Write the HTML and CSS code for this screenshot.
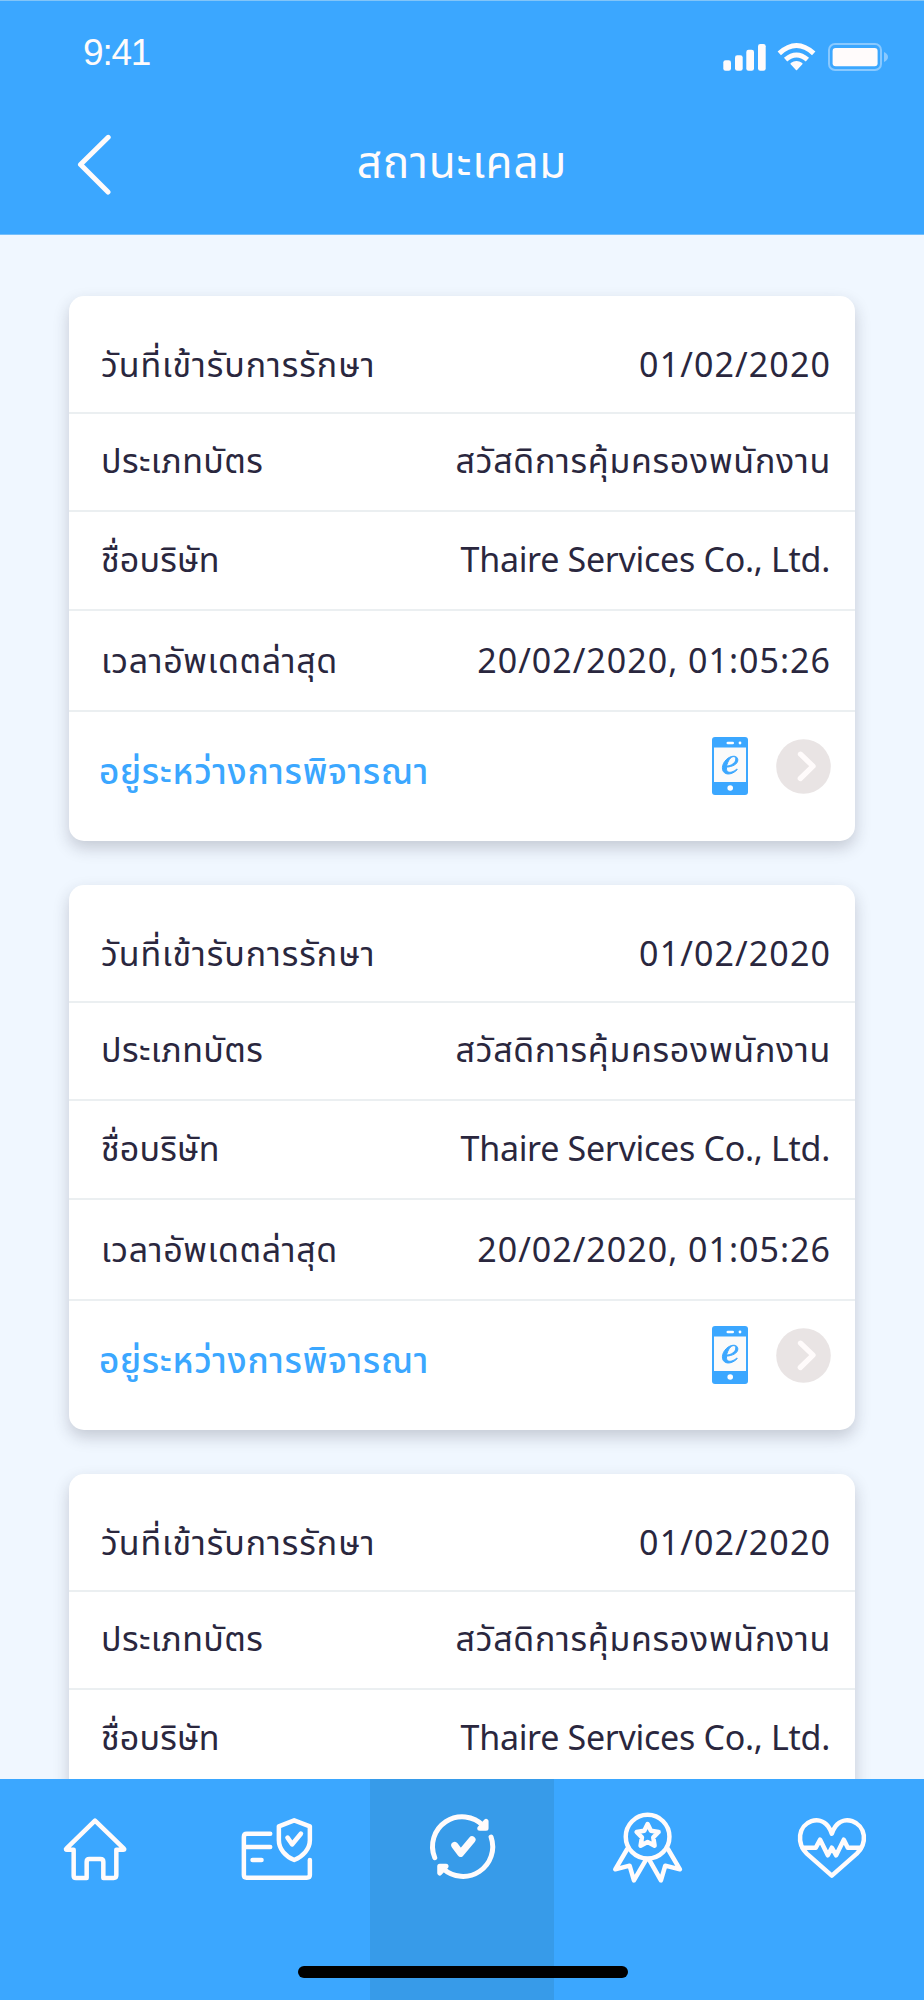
FILE: index.html
```html
<!DOCTYPE html>
<html lang="th">
<head>
<meta charset="utf-8">
<title>สถานะเคลม</title>
<link rel="stylesheet" href="styles.css">
</head>
<body>
<svg width="0" height="0" class="defs">
  <defs>
    <symbol id="ecard" viewBox="0 0 36 58">
      <rect width="36" height="58" rx="3" fill="#3ba7ff"/>
      <rect x="2" y="10.5" width="32" height="34.5" fill="#fafafa"/>
      <rect x="14.5" y="4.7" width="7.5" height="2.6" rx="1.3" fill="#fff"/>
      <circle cx="28" cy="6" r="1.4" fill="#fff"/>
      <circle cx="18.2" cy="51" r="2.8" fill="#fff"/>
      <path d="M13.5 30.2C20 30 26.3 27.200 25.800 22.600C25.300 18.600 20.500 18.200 16 21.200C10.500 25 8.500 32.500 12.500 35.800C16 38.500 22 36.300 25.300 32.500L24.800 32C21.500 35 17.500 36.200 15.500 34.500C13.500 32.500 14.500 26.500 17.500 22.300C20 19 23.500 18.600 23.800 21.800C24 25.500 19.500 29 14 29.200Z" fill="#3ba7ff" stroke="#3ba7ff" stroke-width="1"/>
    </symbol>
    <symbol id="go" viewBox="0 0 55 55">
      <circle cx="27.500" cy="27.500" r="27.300" fill="#e9e4e4"/>
      <path d="M24.500 15.200L37 27.200L24.300 39.500" fill="none" stroke="#fffbfb" stroke-width="5.300" stroke-linecap="round" stroke-linejoin="round"/>
    </symbol>
  </defs>
</svg>
<div class="screen">
  <header class="header">
    <div class="status">
      <span class="time">9:41</span>
      <svg class="indicators" width="168" height="32" viewBox="0 0 168 32">
        <g fill="#fffbfb">
          <rect x="1.300" y="18.300" width="7.700" height="10.400" rx="2.300"/>
          <rect x="13" y="13.300" width="7.700" height="15.400" rx="2.300"/>
          <rect x="24.300" y="7.700" width="7.700" height="21" rx="2.300"/>
          <rect x="36" y="2" width="7.700" height="26.700" rx="2.300"/>
          <rect x="110.600" y="6" width="45" height="18.200" rx="3"/>
          <path d="M69.200 21.700Q74.500 17.800 79.800 21.700L74.500 27.500Z" stroke="#fffbfb" stroke-width="1.500" stroke-linejoin="round"/>
        </g>
        <g fill="none" stroke="#fffbfb" stroke-width="5">
          <path d="M57.300 11.300Q74.500 -4.300 91.700 11.300"/>
          <path d="M63.600 17.700Q74.500 8.300 85.400 17.700"/>
        </g>
        <rect x="107" y="2" width="52" height="26" rx="6" fill="none" stroke="#89c9ff" stroke-width="2"/>
        <path d="M162 10Q166 12 166 15T162 20Z" fill="#89c9ff"/>
      </svg>
    </div>
    <div class="titlebar">
      <svg class="back" width="36" height="62" viewBox="0 0 36 62"><path d="M32.200 4.300L4.500 31.500L32 59" fill="none" stroke="#fffbfb" stroke-width="5" stroke-linecap="round" stroke-linejoin="round"/></svg>
      <h1 class="title">สถานะเคลม</h1>
    </div>
  </header>
  <main class="list">
    <section class="card">
      <div class="row row-date"><span class="t-date">วันที่เข้ารับการรักษา</span><span class="v-date">01/02/2020</span></div>
      <div class="row row-type"><span class="t-type">ประเภทบัตร</span><span class="v-type">สวัสดิการคุ้มครองพนักงาน</span></div>
      <div class="row row-company"><span class="t-company">ชื่อบริษัท</span><span class="v-company">Thaire Services Co., Ltd.</span></div>
      <div class="row row-update"><span class="t-update">เวลาอัพเดตล่าสุด</span><span class="v-update">20/02/2020, 01:05:26</span></div>
      <div class="foot"><span class="t-state">อยู่ระหว่างการพิจารณา</span><div class="actions"><svg width="36" height="58"><use href="#ecard"/></svg><svg width="55" height="55"><use href="#go"/></svg></div></div>
    </section>
    <section class="card">
      <div class="row row-date"><span class="t-date">วันที่เข้ารับการรักษา</span><span class="v-date">01/02/2020</span></div>
      <div class="row row-type"><span class="t-type">ประเภทบัตร</span><span class="v-type">สวัสดิการคุ้มครองพนักงาน</span></div>
      <div class="row row-company"><span class="t-company">ชื่อบริษัท</span><span class="v-company">Thaire Services Co., Ltd.</span></div>
      <div class="row row-update"><span class="t-update">เวลาอัพเดตล่าสุด</span><span class="v-update">20/02/2020, 01:05:26</span></div>
      <div class="foot"><span class="t-state">อยู่ระหว่างการพิจารณา</span><div class="actions"><svg width="36" height="58"><use href="#ecard"/></svg><svg width="55" height="55"><use href="#go"/></svg></div></div>
    </section>
    <section class="card">
      <div class="row row-date"><span class="t-date">วันที่เข้ารับการรักษา</span><span class="v-date">01/02/2020</span></div>
      <div class="row row-type"><span class="t-type">ประเภทบัตร</span><span class="v-type">สวัสดิการคุ้มครองพนักงาน</span></div>
      <div class="row row-company"><span class="t-company">ชื่อบริษัท</span><span class="v-company">Thaire Services Co., Ltd.</span></div>
    </section>
  </main>
  <nav class="tabs">
    <div class="tab">
      <svg class="icon" viewBox="-120 0 554.400 390"><path d="M165 122L79 206Q76 209 81 209H101V288Q101 294 108 294H140V245Q140 237 148 237H181Q190 237 190 245V294H221Q229 294 229 286V209H250Q255 209 251 205Z"/></svg>
    </div>
    <div class="tab">
      <svg class="icon" viewBox="434.400 0 554.400 390"><path d="M690 161H620Q611 161 611 170V285Q611 293 619 293H800Q809 293 809 285V240M611 201H690M637 240H664"/><path d="M762 121L809 139V181C809 207 788 230 762 240C736 230 716 207 716 181V139Z"/><path d="M742 173L756 193L782 161" stroke-width="14"/></svg>
    </div>
    <div class="tab active">
      <svg class="icon icon-bold" viewBox="88.800 0 554.400 390"><path d="M283 233A89 89 0 0 1 429 137M452 171A89 89 0 0 1 308 266"/><path d="M437 124V145H418ZM298 279V259H317Z" fill="#fffbfb"/><path d="M343 196L361 220L395 179" stroke-width="21"/></svg>
    </div>
    <div class="tab">
      <svg class="icon" viewBox="-76.800 0 554.400 390"><circle cx="204" cy="170" r="65.500"/><path d="M204 132L214 152L237 156L221 172L225 197L204 186L183 197L187 172L171 156L194 152Z"/><path d="M143 207L107 268L150 257L163 301L198 241M265 207L301 268L257 257L244 301L210 241"/></svg>
    </div>
    <div class="tab">
      <svg class="icon" viewBox="477.600 0 554.400 390"><path d="M756 287L681 221C661 202 659 185 661 166C666 124 718 104 745 139Q751 147 756 161Q761 147 767 139C794 104 846 124 852 166C854 185 851 202 831 221Z"/><path d="M668 203H708L721 179L744 226L756 203L769 226L792 179L804 203H844"/></svg>
    </div>
    <div class="home-bar"></div>
  </nav>
</div>
</body>
</html>
```
FILE: styles.css
```css
* { box-sizing: border-box; }
body { margin: 0; background: #f0f7ff; font-family: "Noto Sans", "Noto Sans Thai", sans-serif; color: #2a273e; }
.defs { position: absolute; }
.screen { width: 924px; height: 2000px; display: flex; flex-direction: column; overflow: hidden; background: #f0f7ff; }
.header { height: 235px; flex: none; background: #3ba7ff; border-top: 1px solid #82c5f8; border-bottom: 1px solid #74bffb; color: #fffbfb; }
.status { height: 90px; display: flex; justify-content: space-between; padding: 31px 34px 0 83px; }
.time { font: 37px/42px "Liberation Sans", sans-serif; letter-spacing: -1.2px; }
.indicators { margin-top: 10px; flex: none; }
.titlebar { display: flex; height: 143px; padding: 40px 0 0 76px; }
.back { flex: none; margin-top: 2px; }
.title { margin: 0; padding: 0 112px 0 0; flex: 1; text-align: center; font-weight: 400; font-size: 44px; letter-spacing: .8px; line-height: 60px; white-space: nowrap; }
.list { flex: none; height: 1544px; padding: 61px 69px 0; display: flex; flex-direction: column; gap: 44px; overflow: hidden; }
.card { flex: none; height: 545px; background: #fff; border-radius: 15px; box-shadow: 0 7px 16px rgba(40, 40, 60, .22); }
.row { display: flex; justify-content: space-between; align-items: flex-start; border-bottom: 2px solid #ebeff1; padding: 0 24px 0 32px; font-size: 34px; line-height: 50px; white-space: nowrap; }
.row-date { height: 118px; padding-top: 43px; }
.row-type { height: 98px; padding-top: 21px; }
.row-company { height: 99px; padding-top: 22px; padding-right: 25px; }
.row-update { height: 101px; padding-top: 24px; }
.t-date { letter-spacing: .92px; }
.v-date { letter-spacing: 1.1px; }
.t-type { letter-spacing: .4px; }
.v-type { letter-spacing: .7px; }
.t-company { letter-spacing: .15px; }
.v-company { letter-spacing: -.3px; }
.t-update { letter-spacing: .63px; }
.v-update { letter-spacing: 1px; }
.foot { height: 129px; padding: 25px 24px 0 30px; display: flex; justify-content: space-between; align-items: flex-start; }
.t-state { color: #3ba7ff; font-size: 35px; line-height: 50px; font-weight: 500; letter-spacing: .7px; padding-top: 9px; white-space: nowrap; }
.actions { display: flex; gap: 28px; align-items: center; }
.tabs { position: relative; flex: none; height: 221px; display: grid; grid-template-columns: repeat(5, 1fr); background: #3ba7ff; }
.tab.active { background: #379be9; }
.icon { display: block; width: 100%; height: 130px; margin-top: 1px; fill: none; stroke: #fffbfb; stroke-width: 13.5; stroke-linecap: round; stroke-linejoin: round; }
.icon-bold { stroke-width: 15; }
.home-bar { position: absolute; left: 298px; top: 187px; width: 330px; height: 12px; border-radius: 6px; background: #000; }
```
